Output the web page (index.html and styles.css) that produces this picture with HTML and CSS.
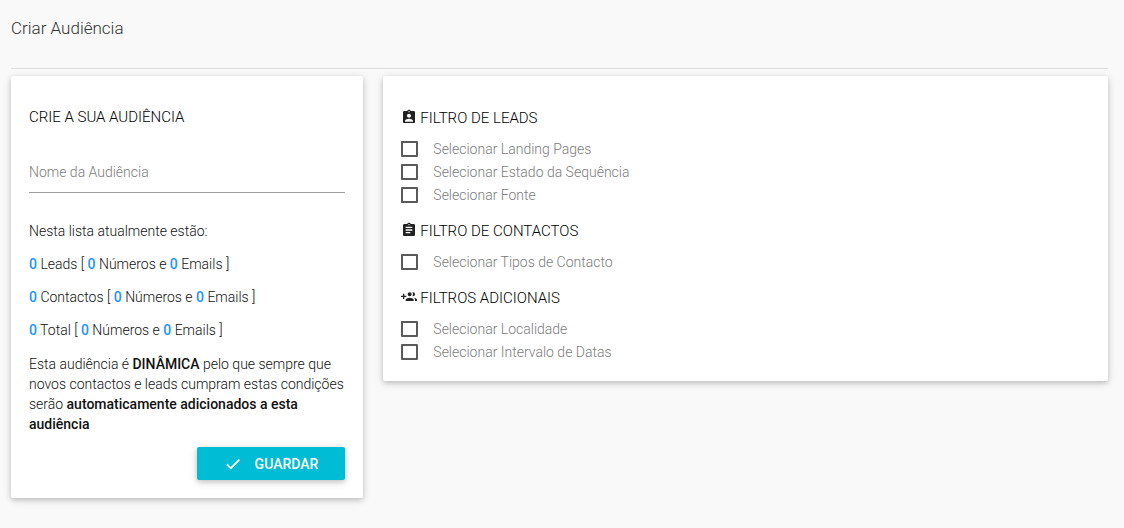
FILE: index.html
```html
<!DOCTYPE html>
<html lang="pt">
<head>
  <meta charset="UTF-8">
  <meta name="viewport" content="width=device-width, initial-scale=1.0">
  <title>Criar Audiência</title>
  <link rel="stylesheet" href="styles.css">
</head>
<body>

  <header class="page-header">
    <h1>Criar Audiência</h1>
  </header>

  <main class="row">
    <!-- Audience -->
    <form class="card audience-card">
      <h2 class="card-title">CRIE A SUA AUDIÊNCIA</h2>
      <input type="text" class="text-field" id="nome" name="nome" placeholder="Nome da Audiência" aria-label="Nome da Audiência">

      <div class="totals">
        <p>Nesta lista atualmente estão:</p>
        <p><b class="count">0</b> Leads [ <b class="count">0</b> Números e <b class="count">0</b> Emails ]</p>
        <p><b class="count">0</b> Contactos [ <b class="count">0</b> Números e <b class="count">0</b> Emails ]</p>
        <p><b class="count">0</b> Total [ <b class="count">0</b> Números e <b class="count">0</b> Emails ]</p>
      </div>

      <p class="note">Esta audiência é <b>DINÂMICA</b> pelo que sempre que novos contactos e leads cumpram estas condições serão <b>automaticamente adicionados a esta audiência</b></p>

      <button type="submit" class="btn">
        <svg class="btn-icon" viewBox="0 0 24 24"><path d="M9 16.17L4.83 12l-1.42 1.41L9 19 21 7l-1.41-1.41z"/></svg>
        GUARDAR
      </button>
    </form>

    <!-- Filters -->
    <section class="card filters-card">
      <div class="filter-group">
        <h2 class="filter-title">
          <svg class="filter-icon" viewBox="0 0 24 24"><path d="M19 3h-4.18C14.4 1.84 13.3 1 12 1c-1.3 0-2.4.84-2.82 2H5c-1.1 0-2 .9-2 2v14c0 1.1.9 2 2 2h14c1.1 0 2-.9 2-2V5c0-1.1-.9-2-2-2zm-7 0c.55 0 1 .45 1 1s-.45 1-1 1-1-.45-1-1 .45-1 1-1zm0 4c1.66 0 3 1.34 3 3s-1.34 3-3 3-3-1.34-3-3 1.34-3 3-3zm6 12H6v-1.4c0-2 4-3.1 6-3.1s6 1.1 6 3.1V19z"/></svg>
          FILTRO DE LEADS
        </h2>
        <label class="check"><input type="checkbox" name="landing">Selecionar Landing Pages</label>
        <label class="check"><input type="checkbox" name="estado">Selecionar Estado da Sequência</label>
        <label class="check"><input type="checkbox" name="fonte">Selecionar Fonte</label>
      </div>

      <div class="filter-group">
        <h2 class="filter-title">
          <svg class="filter-icon" viewBox="0 0 24 24"><path d="M19 3h-4.18C14.4 1.84 13.3 1 12 1c-1.3 0-2.4.84-2.82 2H5c-1.1 0-2 .9-2 2v14c0 1.1.9 2 2 2h14c1.1 0 2-.9 2-2V5c0-1.1-.9-2-2-2zm-7 0c.55 0 1 .45 1 1s-.45 1-1 1-1-.45-1-1 .45-1 1-1zm2 14H7v-2h7v2zm3-4H7v-2h10v2zm0-4H7V7h10v2z"/></svg>
          FILTRO DE CONTACTOS
        </h2>
        <label class="check"><input type="checkbox" name="tipos">Selecionar Tipos de Contacto</label>
      </div>

      <div class="filter-group">
        <h2 class="filter-title">
          <svg class="filter-icon" viewBox="0 0 24 24"><path d="M8 10H5V7H3v3H0v2h3v3h2v-3h3v-2zm10 1c1.66 0 2.99-1.34 2.99-3S19.66 5 18 5c-.32 0-.63.05-.91.14.57.81.9 1.79.9 2.86s-.34 2.04-.9 2.86c.28.09.59.14.91.14zm-5 0c1.66 0 2.99-1.34 2.99-3S14.66 5 13 5c-1.66 0-3 1.34-3 3s1.34 3 3 3zm6.62 2.16c.83.73 1.38 1.66 1.38 2.84v2h3v-2c0-1.54-2.37-2.49-4.38-2.84zM13 13c-2 0-6 1-6 3v2h12v-2c0-2-4-3-6-3z"/></svg>
          FILTROS ADICIONAIS
        </h2>
        <label class="check"><input type="checkbox" name="localidade">Selecionar Localidade</label>
        <label class="check"><input type="checkbox" name="datas">Selecionar Intervalo de Datas</label>
      </div>
    </section>
  </main>

</body>
</html>
```

FILE: styles.css
```css
* {
  box-sizing: border-box;
}

body {
  font-family: Roboto, sans-serif;
  font-size: 14px;
  font-weight: 300;
  line-height: 20px;
  margin: 0;
  padding: 0 16px 20px 11px;
  background-color: #f9f9f9;
  color: #111;
}

h1, h2, p {
  margin: 0;
}

b {
  font-weight: 500;
}

.page-header {
  padding: 18px 0 30px;
  margin-bottom: 7px;
  border-bottom: 1px solid #ddd;
}

.page-header h1 {
  font-size: 17px;
  font-weight: 300;
  color: #333;
}

.row {
  display: grid;
  grid-template-columns: repeat(12, 1fr);
  gap: 20px;
  align-items: start;
}

.card {
  background-color: #fff;
  border-radius: 2px;
  box-shadow: 0 2px 5px 0 rgba(0, 0, 0, 0.16), 0 2px 10px 0 rgba(0, 0, 0, 0.12);
}

/* Audience form */
.audience-card {
  grid-column: span 4;
  display: flex;
  flex-direction: column;
  padding: 31px 18px 18px;
}

.card-title,
.filter-title {
  font-size: 15px;
  font-weight: 300;
  color: #000;
}

.text-field {
  width: 100%;
  height: 42px;
  margin: 24px 0 28px;
  padding: 0;
  border: none;
  border-bottom: 1px solid #9e9e9e;
  background: none;
  font: inherit;
  outline: none;
}

.text-field::placeholder {
  color: #7c7c7c;
}

.totals {
  display: flex;
  flex-direction: column;
  gap: 13px;
}

.count {
  color: #2196f3;
}

.note {
  margin: 14px 0 13px;
}

.btn {
  display: flex;
  align-items: center;
  align-self: flex-end;
  gap: 13px;
  height: 33px;
  padding: 0 27px;
  border: none;
  border-radius: 2px;
  background-color: #00bcd4;
  color: #fff;
  font: inherit;
  font-weight: 500;
  cursor: pointer;
  box-shadow: 0 2px 5px 0 rgba(0, 0, 0, 0.16), 0 2px 10px 0 rgba(0, 0, 0, 0.12);
}

.btn-icon {
  width: 18px;
  height: 18px;
  fill: currentColor;
  stroke: currentColor;
  stroke-width: 0.6;
}

/* Filters */
.filters-card {
  grid-column: span 8;
  display: flex;
  flex-direction: column;
  gap: 15px;
  padding: 32px 18px 18px;
}

.filter-title {
  display: flex;
  align-items: center;
  gap: 3px;
  margin-bottom: 9px;
}

.filter-icon {
  width: 16px;
  height: 16px;
  margin-bottom: 2px;
  fill: #212121;
}

.check {
  display: flex;
  align-items: center;
  gap: 15px;
  height: 23px;
  color: #7c7c7c;
  cursor: pointer;
}

.check input {
  appearance: none;
  width: 17px;
  height: 16px;
  margin: 0;
  border: 2px solid #5a5a5a;
  border-radius: 1px;
  cursor: pointer;
}

.check input:checked {
  background-color: #00bcd4;
}
```
